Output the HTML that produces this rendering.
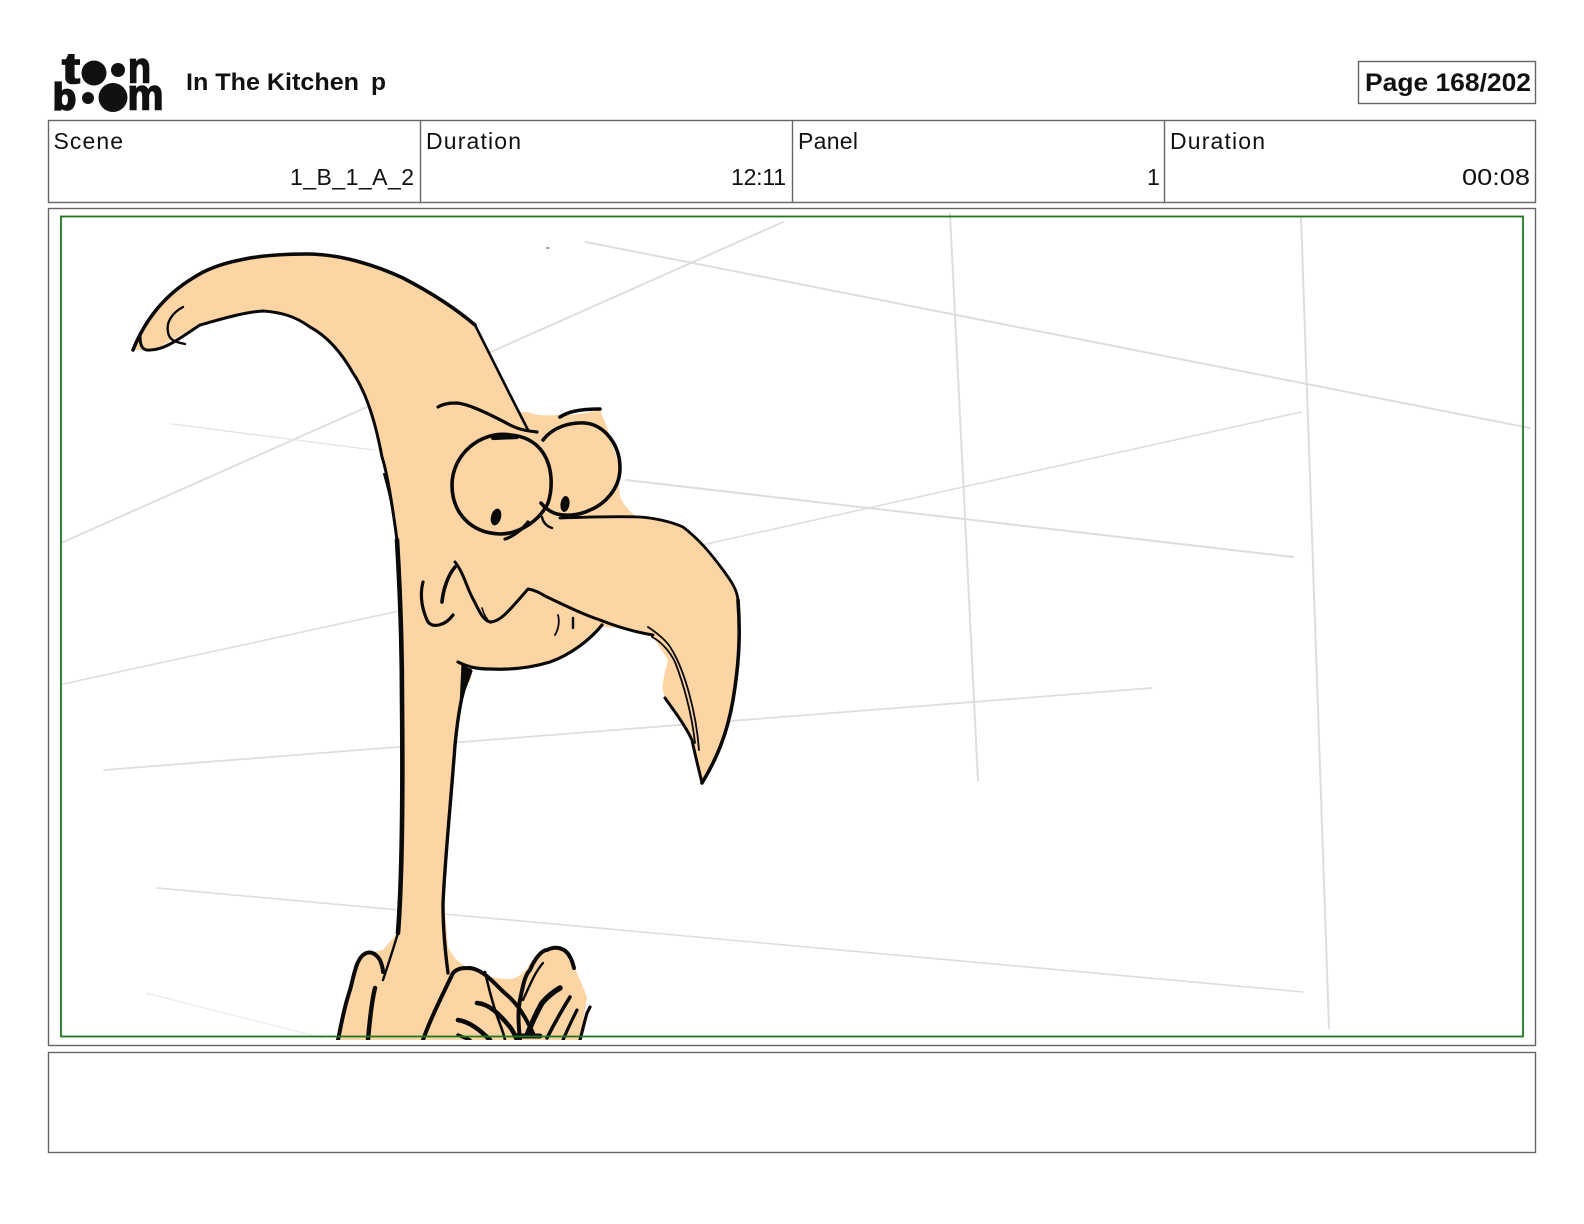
<!DOCTYPE html>
<html><head><meta charset="utf-8"><title>In The Kitchen p</title>
<style>html,body{margin:0;padding:0;background:#fff}svg{display:block}text{font-family:"Liberation Sans",Arial,sans-serif;fill:#111}</style></head>
<body>
<svg width="1584" height="1224" viewBox="0 0 1584 1224" xmlns="http://www.w3.org/2000/svg">
<rect width="1584" height="1224" fill="#fff"/>
<!-- logo -->
<g fill="#111" stroke="#111">
<text x="62" y="83" font-size="44" font-weight="700" textLength="18" lengthAdjust="spacingAndGlyphs" stroke-width="1.6">t</text>
<text x="128" y="82.5" font-size="44" font-weight="700" textLength="23" lengthAdjust="spacingAndGlyphs" stroke-width="1.6">n</text>
<text x="53" y="109.5" font-size="37" font-weight="700" textLength="23" lengthAdjust="spacingAndGlyphs" stroke-width="2.2">b</text>
<text x="127.5" y="109.5" font-size="44" font-weight="700" textLength="36" lengthAdjust="spacingAndGlyphs" stroke-width="1.6">m</text>
<g stroke="none"><circle cx="94" cy="73" r="12.5"/><circle cx="118" cy="70" r="7"/><circle cx="88" cy="98" r="6"/><circle cx="113" cy="97.5" r="14.5"/></g>
</g>
<text x="186" y="90" font-size="24" font-weight="700" textLength="173" lengthAdjust="spacingAndGlyphs">In The Kitchen</text>
<text x="371" y="90" font-size="24" font-weight="700" textLength="15" lengthAdjust="spacingAndGlyphs">p</text>
<rect x="1358.5" y="61.5" width="177" height="42" fill="none" stroke="#666" stroke-width="1.4"/>
<text x="1365" y="91" font-size="25" font-weight="700" textLength="166" lengthAdjust="spacingAndGlyphs">Page 168/202</text>
<!-- info table -->
<g fill="none" stroke="#666" stroke-width="1.4">
<rect x="48.5" y="120.5" width="1487" height="82"/>
<path d="M420.5 120V203M792.5 120V203M1164.5 120V203"/>
<rect x="48.5" y="208.5" width="1487" height="837"/>
<rect x="48.5" y="1052.5" width="1487" height="100"/>
</g>
<g font-size="23">
<text x="53.5" y="149" textLength="69.5" lengthAdjust="spacing">Scene</text>
<text x="426" y="149" textLength="95" lengthAdjust="spacing">Duration</text>
<text x="798" y="149" textLength="60" lengthAdjust="spacing">Panel</text>
<text x="1170" y="149" textLength="95" lengthAdjust="spacing">Duration</text>
<text x="290" y="185" textLength="124" lengthAdjust="spacing">1_B_1_A_2</text>
<text x="731" y="185" textLength="55" lengthAdjust="spacing">12:11</text>
<text x="1147" y="185">1</text>
<text x="1462" y="185" textLength="68" lengthAdjust="spacingAndGlyphs">00:08</text>
</g>
<!-- background perspective lines -->
<g stroke="#dedede" stroke-width="2" fill="none" stroke-linecap="round">
<path d="M61 543L783 222"/><path d="M586 242L1530 428"/><path d="M950 214L978 781"/><path d="M1301 217L1329 1028"/>
<path d="M172 424L374 450" stroke-width="1.3" stroke="#e4e4e4"/><path d="M626 480L1293 557"/><path d="M702 545L1301 412" stroke-width="1.6"/>
<path d="M63 684L399 611" stroke-width="1.6"/><path d="M104 770L1152 688" stroke-width="1.8"/><path d="M157 888L1303 992" stroke-width="1.6"/>
<path d="M146 993L323 1038" stroke-width="1.2" stroke="#ececec"/><path d="M547 248h1.5" stroke="#999"/>
</g>
<!-- character fill -->
<path fill="#fdd4a3" d="M133 350C145 320 165 295 193 278C208 268 225 263 240 260C262 255 285 254 307 254C340 254 375 265 403 278C430 292 455 308 475 325L519 412L528 412C540 417 550 415 560 415C575 416 590 412 600 410L607 427C612 445 618 460 620 470C619 480 619 490 620 497C625 507 630 512 637 517C655 518 672 522 683 527C700 540 712 555 723 570C732 582 737 590 738 600C741 640 738 670 733 700C727 735 716 760 702 783L693 743C685 725 675 712 665 698C663 693 662 688 663 683C664 675 666 668 668 660L653 637L625 628L600 627C590 640 570 655 550 662C530 668 510 670 490 669L473 668L470 682L463 682C460 700 455 740 452 780C447 830 442 880 445 910L448 947C452 955 458 962 463 965C475 972 490 978 505 979C515 980 522 975 527 968C535 955 545 947 553 947C565 947 572 960 575 968L587 997L580 1040L340 1040C345 1015 350 990 355 975C358 960 365 952 372 952L383 950L398 932C402 880 403 800 402 700C402 640 400 590 397 540C393 510 388 475 382 457C377 430 368 395 353 373C340 350 325 335 310 327C295 316 280 312 263 311C245 312 225 318 200 325C185 332 170 342 157 348C150 350 145 351 143 350Z"/>
<!-- character ink -->
<defs><clipPath id="c"><rect x="0" y="0" width="1584" height="1040"/></clipPath></defs>
<g clip-path="url(#c)" fill="none" stroke="#0a0a0a" stroke-linecap="round" stroke-linejoin="round" stroke-width="3">
<!-- horn -->
<path d="M133 350C145 320 165 295 193 278C208 268 225 263 240 260C262 255 285 254 307 254C340 254 375 265 403 278C430 292 455 308 475 325" stroke-width="3.6"/>
<path d="M475 325C490 355 510 395 528 430" stroke-width="2.6"/>
<path d="M140 336C140 345 142 351 150 350C165 350 180 338 200 325C225 318 245 312 263 311C280 312 295 316 310 327C325 335 340 350 353 373C368 395 377 430 382 457C388 475 393 510 397 540"/>
<path d="M183 307C172 313 166 322 168 332C169 340 175 342 185 344" stroke-width="2.4"/>
<path d="M384 474C390 495 396 520 398 560" stroke-width="2"/>
<!-- neck -->
<path d="M397 540C400 590 402 640 402 700C403 800 402 880 398 933" stroke-width="4.6"/>
<path d="M470 670C462 690 458 715 455 745C451 800 444 870 443 905C443 930 445 950 448 973" stroke-width="3.4"/>
<path d="M462 665L472 671L465 690L460 708Z" fill="#0a0a0a" stroke-width="1.2"/>
<!-- brows -->
<path d="M438 407C445 403 452 403 457 403C470 404 497 418 510 425C520 430 528 431 537 432" stroke-width="3.2"/>
<path d="M560 417C568 412 578 409 600 409" stroke-width="3.6"/>
<!-- eyes -->
<path d="M511 435C480 430 452 455 452 485C452 512 470 533 500 534C520 534 540 520 548 503C553 488 553 465 541 450C533 440 522 436 511 435Z" stroke-width="3.6"/>
<path d="M493 438L517 437" stroke-width="4.2"/>
<path d="M543 440C553 427 570 422 585 423C605 425 620 445 620 468C620 490 603 505 590 510C578 516 565 516 557 514C550 512 545 508 541 503" stroke-width="3.6"/>
<ellipse cx="496" cy="517" rx="5" ry="8.5" fill="#0a0a0a" stroke="none" transform="rotate(15 496 517)"/>
<ellipse cx="565" cy="504" rx="4.5" ry="8" fill="#0a0a0a" stroke="none" transform="rotate(8 565 504)"/>
<path d="M505 539C512 537 522 530 528 522" stroke-width="3.2"/>
<path d="M542 517C543 522 546 526 552 528" stroke-width="2.4"/>
<path d="M560 518C590 517 615 516 640 517C655 518 672 522 683 527C700 540 712 555 723 570C732 582 737 590 738 600" stroke-width="2.8"/>
<path d="M738 600C741 640 738 670 733 700C727 735 716 760 702 783" stroke-width="3.6"/>
<!-- beak inner -->
<path d="M665 698C675 712 685 725 692 740C695 755 699 770 702 783" stroke-width="3"/>
<path d="M648 627C660 635 668 642 672 650C684 670 696 710 699 750" stroke-width="1.8"/>
<path d="M652 637C662 642 670 652 675 662C684 685 692 715 695 743" stroke-width="1.8"/>
<!-- mouth -->
<path d="M423 582C419 597 423 612 428 622C433 628 445 626 453 615" stroke-width="3.2"/>
<path d="M442 602C443 590 448 575 455 567" stroke-width="3.6"/>
<path d="M455 562C463 572 466 585 472 597C478 608 482 620 490 622C500 622 508 612 528 589C535 590 540 593 545 596C570 608 585 615 600 620C620 628 635 632 653 635"/>
<path d="M482 608C484 615 487 620 491 623" stroke-width="1.6"/>
<path d="M558 615C560 622 558 630 555 635" stroke-width="1.8"/>
<path d="M573 618L573 628" stroke-width="2.4"/>
<path d="M602 625C590 640 570 655 550 662C530 668 510 670 490 669C480 669 470 668 458 662" stroke-width="3.2"/>
<!-- wings -->
<g stroke-width="4">
<path d="M338 1040C342 1020 345 1005 350 990C354 975 356 962 362 956C368 950 375 952 380 960C382 965 383 968 383 972"/>
<path d="M383 980C388 965 392 953 398 933" stroke-width="2.4"/>
<path d="M375 988C372 1000 370 1017 368 1040" stroke-width="4.4"/>
<path d="M423 1040C430 1020 440 1000 453 973C458 968 462 968 470 968C485 970 495 985 507 995C515 1002 522 1010 533 1033"/>
<path d="M485 972C488 985 492 1000 495 1010C498 1020 503 1030 505 1040" stroke-width="2.6"/>
<path d="M477 1003C490 1004 500 1015 510 1027C513 1031 515 1035 517 1040" stroke-width="4.6"/>
<path d="M458 1020C470 1022 480 1030 490 1040" stroke-width="4.6"/>
<path d="M458 1035L470 1040" stroke-width="3.4"/>
<path d="M520 1040C518 1020 518 1010 520 1000C523 985 525 975 530 970C535 958 542 950 547 950C555 946 565 947 570 957C572 960 573 964 574 968"/>
<path d="M523 1000C530 985 535 972 543 963" stroke-width="2.4"/>
<path d="M527 1035C533 1020 538 1010 542 1003C548 996 553 992 560 988" stroke-width="5.4"/>
<path d="M547 1038C555 1022 562 1010 570 997" stroke-width="3.6"/>
<path d="M563 1040C568 1028 572 1020 577 1010" stroke-width="3.2"/>
<path d="M580 1040C583 1028 585 1020 587 1013L590 1007" stroke-width="3.2"/>
<path d="M515 1036H540" stroke-width="5"/>
</g>
</g>
<!-- safe frame -->
<rect x="61" y="216.5" width="1462" height="820" fill="none" stroke="#217821" stroke-width="1.8"/>
</svg>
</body></html>
